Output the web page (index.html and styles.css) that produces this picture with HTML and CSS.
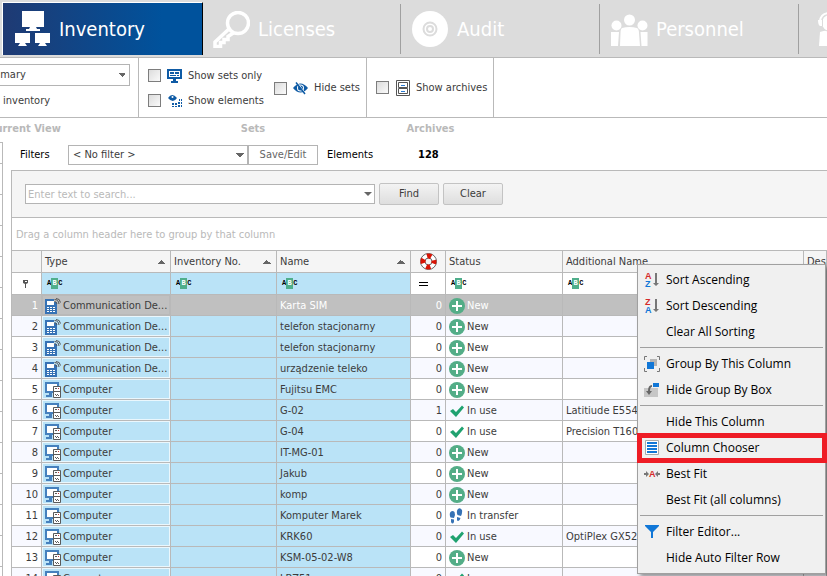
FILE: index.html
```html
<!DOCTYPE html>
<html lang="en">
<head>
	<meta charset="UTF-8">
	<title>Inventory</title>
	<link rel="stylesheet" href="styles.css">
</head>
<body>
	<svg class="sprite" aria-hidden="true">
		<symbol id="i-phone" viewBox="0 0 16 16">
			<path fill="#3672b5" d="M0 1h9v3h3v12H0z"/>
			<path fill="#fff" d="M2 3h7v4H2zM2 9h2v1H2zM5 9h2v1H5zM8 9h2v1H8zM2 11h2v1H2zM5 11h2v1H5zM8 11h2v1H8zM2 13h2v1H2zM5 13h2v1H5zM8 13h2v1H8z"/>
			<path fill="none" stroke="#555" d="M9.500 3.500q2 0 2.500 2.500M9.500 1.500q4 0 4.500 4.500M11 .5q4 0 4.500 4"/>
		</symbol>
		<symbol id="i-pc" viewBox="0 0 16 16">
			<path fill="#4580bd" d="M0 0h14v4h-2V2H2v7h6v2H0zM4 11h3v2H4zM1 13h6v2H1z"/>
			<path fill="#fff" d="M2 2h10v2H8v5H2z"/>
			<path fill="#fff" stroke="#5a5a5a" d="M8.500 4.500h7v11h-7z"/>
			<path fill="#5a5a5a" d="M10 6h2v1h-2zM9 9h6v1H9zM10 12h1v1h-1zM12 12h1v1h-1zM11 13h1v1h-1zM13 13h1v1h-1z"/>
			<path fill="#c33" d="M13 6h1v1h-1z"/>
		</symbol>
		<symbol id="i-new" viewBox="0 0 16 16">
			<circle cx="8" cy="8" r="8" fill="#53ad87"/>
			<path fill="#fff" d="M7 3h2v4h4v2H9v4H7V9H3V7h4z"/>
		</symbol>
		<symbol id="i-use" viewBox="0 0 16 16">
			<path fill="#20a270" d="M1 8l3-2 3 3 6-6.500 2 2L7 14z"/>
		</symbol>
		<symbol id="i-transfer" viewBox="0 0 16 16">
			<path fill="#3672b5" d="M1.500 4q2-2 4 0l.5 3-1 3-3.500-.5Q0 6 1.500 4zM2 11l3 .5V14q-1.500 3-3 0zM9 1q2-2 4 1 .5 3-1 6l-3.500-1Q7 3 9 1zM8 9l3.500 1q-1 4-3.500 2.500z"/>
		</symbol>
	</svg>

	<nav class="tabs">
		<a href="#" class="tab active">
			<svg width="37" height="37" viewBox="0 0 37 37" fill="#fff">
				<path d="M8 0h22v16H8zM16 16h6l1 2h3v2H12v-2h3zM1 22h15v10H1zM6 32h5l2 3H4zM21 22h15v10H21zM26 32h5l2 3h-9z"/>
			</svg>
			Inventory
		</a>
		<a href="#" class="tab">
			<svg width="37" height="37" viewBox="0 0 37 37" fill="none" stroke="#fff" stroke-width="3.500">
				<circle cx="25" cy="12" r="10.500"/>
				<path d="M17 17L2 31v4.500h5.500v-4h3.500v-3h4v-3l6-4"/>
			</svg>
			Licenses
		</a>
		<a href="#" class="tab">
			<svg width="37" height="37" viewBox="0 0 37 37">
				<circle cx="18" cy="18" r="18" fill="#fff"/>
				<g fill="none" stroke="#dcdcdc" stroke-width="2"><circle cx="18" cy="18" r="6.500"/><circle cx="18" cy="18" r="3"/></g>
			</svg>
			Audit
		</a>
		<a href="#" class="tab">
			<svg width="37" height="37" viewBox="0 0 37 37" fill="#fff">
				<circle cx="18.500" cy="9" r="5.500"/><circle cx="5.500" cy="14.500" r="5"/><circle cx="31.500" cy="14.500" r="5"/>
				<path d="M11 17q7.500-2 15 0 2 1 2 5l1 13H9l.5-13q0-4 1.500-5zM0 21h8L7 35H0zM29.500 21h7v14h-6z"/>
			</svg>
			Personnel
		</a>
		<a href="#" class="tab last" aria-label="Service">
			<svg width="37" height="37" viewBox="0 0 37 37" fill="#fff">
				<circle cx="12" cy="12" r="8"/>
				<path d="M2 21q10-4 20 0l3 14H1z"/>
				<path fill="none" stroke="#fff" stroke-width="2" d="M2 10q1-8 10-8"/>
				<path d="M0 9h4v6H2q-2-1-2-6z"/>
				<path fill="none" stroke="#dcdcdc" d="M4.500 8v7M4 16q3 5 9 4"/>
			</svg>
		</a>
	</nav>

	<section class="ribbon">
		<div class="group view">
			<div class="group-body">
				<select class="combo" aria-label="View"><option>Summary</option></select>
				<span class="view-note">inventory</span>
			</div>
			<h2>Current View</h2>
		</div>
		<div class="group sets">
			<div class="group-body">
				<label><input type="checkbox">
					<svg width="16" height="16" viewBox="0 0 16 16" fill="#0f5ba5"><path d="M0 1h15v10H0zM6 11h3v2h2v2H4v-2h2z"/><path fill="#fff" d="M2 3h11v6H2z"/><path d="M3 4h4v2H3zM8 4h4v2H8zM3 7h6v1H3zM10 7h2v1h-2z"/></svg>
					Show sets only</label>
				<label class="hide-sets"><input type="checkbox">
					<svg width="16" height="16" viewBox="0 0 16 16" fill="#0f5ba5"><path d="M0 8q7.500-9 15 0-7.500 9-15 0z"/><circle cx="7.500" cy="8" r="3.500" fill="#fff"/><circle cx="7.500" cy="8" r="2.500"/><path stroke="#fff" d="M4 2l9 12"/><path stroke="#0f5ba5" stroke-width="1.500" d="M3 2.500l9 11.500"/></svg>
					Hide sets</label>
				<label><input type="checkbox">
					<svg width="16" height="16" viewBox="0 0 16 16" fill="#0f5ba5"><path d="M1 5q4-6 9 0-4 6-9 0z"/><circle cx="5.500" cy="4" r="1" fill="#fff"/><path d="M12 6h1v2h-1zM14 6h1v2h-1zM5 10h2v2H5zM8 10h2v2H8zM11 9h2v2h-2zM14 9h1v2h-1zM5 13h2v1H5zM8 13h2v1H8zM11 12h2v2h-2zM14 12h1v2h-1z"/></svg>
					Show elements</label>
			</div>
			<h2>Sets</h2>
		</div>
		<div class="group archives">
			<div class="group-body">
				<label><input type="checkbox">
					<svg width="16" height="16" viewBox="0 0 16 16" fill="none" stroke="#555"><path d="M1.500.5h13v15h-13zM3.500 2.500h9v5h-9zM3.500 8.500h9v5h-9z"/><path stroke="#2b7cd3" d="M6 5.500h4M6 11.500h4"/></svg>
					Show archives</label>
			</div>
			<h2>Archives</h2>
		</div>
		<div class="group rest"><div class="group-body"></div></div>
	</section>

	<div class="page">
		<div class="side"></div>
		<main>
			<div class="filters">
				<label for="filter">Filters</label>
				<select id="filter" class="combo"><option>&lt; No filter &gt;</option></select>
				<button type="button" class="save">Save/Edit</button>
				<span class="elements">Elements</span>
				<b>128</b>
			</div>
			<div class="grid">
				<div class="search">
					<div class="search-box">
						<input type="text" placeholder="Enter text to search..." aria-label="Search">
					</div>
					<button type="button">Find</button>
					<button type="button">Clear</button>
				</div>
				<div class="group-by">Drag a column header here to group by that column</div>
				<table>
					<colgroup>
						<col class="c-no"><col class="c-type"><col class="c-inv"><col class="c-name"><col class="c-sup"><col class="c-status"><col class="c-add"><col>
					</colgroup>
					<thead>
						<tr>
							<th></th>
							<th class="sorted">Type</th>
							<th class="sorted">Inventory No.</th>
							<th class="sorted">Name</th>
							<th class="sup"><svg width="17" height="17" viewBox="0 0 17 17"><circle cx="8.500" cy="8.500" r="5.500" fill="none" stroke="#fff" stroke-width="5"/><g fill="none" stroke="#666"><circle cx="8.500" cy="8.500" r="8"/><circle cx="8.500" cy="8.500" r="3.500"/></g><circle cx="8.500" cy="8.500" r="5.500" fill="none" stroke="#d81405" stroke-width="5" stroke-dasharray="4.320 4.320" stroke-dashoffset="2.160"/></svg></th>
							<th>Status</th>
							<th>Additional Name</th>
							<th>Description</th>
						</tr>
						<tr class="auto-filter">
							<td class="pin"><svg width="7" height="9" viewBox="0 0 7 9"><path fill="#555" d="M1 1h5v3L4 5v4H3V5L1 4z"/><path fill="#fff" d="M3 2h2v1H3z"/></svg></td>
							<td class="blue"><span class="abc">A<i>B</i>C</span></td>
							<td class="blue"><span class="abc">A<i>B</i>C</span></td>
							<td class="blue"><span class="abc">A<i>B</i>C</span></td>
							<td><svg class="eq" width="9" height="4" viewBox="0 0 9 4"><path d="M0 0h9v1H0zM0 3h9v1H0z"/></svg></td>
							<td><span class="abc">A<i>B</i>C</span></td>
							<td><span class="abc">A<i>B</i>C</span></td>
							<td></td>
						</tr>
					</thead>
					<tbody>
						<tr class="selected"><td>1</td><td><svg><use href="#i-phone"/></svg>Communication De...</td><td></td><td>Karta SIM</td><td>0</td><td><svg><use href="#i-new"/></svg>New</td><td></td><td></td></tr>
						<tr><td>2</td><td><svg><use href="#i-phone"/></svg>Communication De...</td><td></td><td>telefon stacjonarny</td><td>0</td><td><svg><use href="#i-new"/></svg>New</td><td></td><td></td></tr>
						<tr><td>3</td><td><svg><use href="#i-phone"/></svg>Communication De...</td><td></td><td>telefon stacjonarny</td><td>0</td><td><svg><use href="#i-new"/></svg>New</td><td></td><td></td></tr>
						<tr><td>4</td><td><svg><use href="#i-phone"/></svg>Communication De...</td><td></td><td>urządzenie teleko</td><td>0</td><td><svg><use href="#i-new"/></svg>New</td><td></td><td></td></tr>
						<tr><td>5</td><td><svg><use href="#i-pc"/></svg>Computer</td><td></td><td>Fujitsu EMC</td><td>0</td><td><svg><use href="#i-new"/></svg>New</td><td></td><td></td></tr>
						<tr><td>6</td><td><svg><use href="#i-pc"/></svg>Computer</td><td></td><td>G-02</td><td>1</td><td><svg><use href="#i-use"/></svg>In use</td><td>Latitiude E5540</td><td></td></tr>
						<tr><td>7</td><td><svg><use href="#i-pc"/></svg>Computer</td><td></td><td>G-04</td><td>0</td><td><svg><use href="#i-use"/></svg>In use</td><td>Precision T1600</td><td></td></tr>
						<tr><td>8</td><td><svg><use href="#i-pc"/></svg>Computer</td><td></td><td>IT-MG-01</td><td>0</td><td><svg><use href="#i-new"/></svg>New</td><td></td><td></td></tr>
						<tr><td>9</td><td><svg><use href="#i-pc"/></svg>Computer</td><td></td><td>Jakub</td><td>0</td><td><svg><use href="#i-new"/></svg>New</td><td></td><td></td></tr>
						<tr><td>10</td><td><svg><use href="#i-pc"/></svg>Computer</td><td></td><td>komp</td><td>0</td><td><svg><use href="#i-new"/></svg>New</td><td></td><td></td></tr>
						<tr><td>11</td><td><svg><use href="#i-pc"/></svg>Computer</td><td></td><td>Komputer Marek</td><td>0</td><td><svg><use href="#i-transfer"/></svg>In transfer</td><td></td><td></td></tr>
						<tr><td>12</td><td><svg><use href="#i-pc"/></svg>Computer</td><td></td><td>KRK60</td><td>0</td><td><svg><use href="#i-use"/></svg>In use</td><td>OptiPlex GX520</td><td></td></tr>
						<tr><td>13</td><td><svg><use href="#i-pc"/></svg>Computer</td><td></td><td>KSM-05-02-W8</td><td>0</td><td><svg><use href="#i-new"/></svg>New</td><td></td><td></td></tr>
						<tr><td>14</td><td><svg><use href="#i-pc"/></svg>Computer</td><td></td><td>LBZ51</td><td>0</td><td><svg><use href="#i-use"/></svg>In use</td><td></td><td></td></tr>
					</tbody>
				</table>
			</div>
		</main>
	</div>

	<div class="menu" role="menu">
		<button type="button" role="menuitem"><svg viewBox="0 0 16 16"><text x="1" y="7" fill="#d42a2a">A</text><text x="1" y="15" fill="#1177d7">Z</text><path fill="#777" d="M11 1h2v10h2l-3 3-3-3h2z"/></svg>Sort Ascending</button>
		<button type="button" role="menuitem"><svg viewBox="0 0 16 16"><text x="1" y="7" fill="#d42a2a">Z</text><text x="1" y="15" fill="#1177d7">A</text><path fill="#777" d="M11 1h2v10h2l-3 3-3-3h2z"/></svg>Sort Descending</button>
		<button type="button" role="menuitem"><svg></svg>Clear All Sorting</button>
		<hr>
		<button type="button" role="menuitem"><svg viewBox="0 0 16 16"><path fill="#b5b5b5" d="M6 3h7v7H6z"/><path fill="#1177d7" d="M3 6h7v7H3z"/><path fill="none" stroke="#777" d="M3 .5H.5V4M13 .5h2.500V4M3 15.500H.5V12M13 15.500h2.500V12"/></svg>Group By This Column</button>
		<button type="button" role="menuitem"><svg viewBox="0 0 16 16"><path fill="#c6c6c6" d="M0 6h14v9H0z"/><path fill="#1177d7" d="M9 1h6v4H9z"/><path fill="#666" d="M8 3v2q-2 0-2 4h2l-3 4-3-4h2q0-6 4-6z"/></svg>Hide Group By Box</button>
		<hr>
		<button type="button" role="menuitem"><svg></svg>Hide This Column</button>
		<button type="button" role="menuitem" class="marked"><svg viewBox="0 0 16 16"><path fill="#fff" stroke="#aaa" d="M1.500.5h13v14h-13z"/><path fill="#1177d7" d="M3 2h10v2H3zM3 5h10v2H3zM3 8h10v2H3zM3 11h10v2H3z"/></svg>Column Chooser</button>
		<button type="button" role="menuitem"><svg viewBox="0 0 16 16"><text x="5" y="11" fill="#d42a2a">A</text><path fill="#777" d="M0 7h2V5l3 3-3 3V9H0zM16 7h-2V5l-3 3 3 3V9h2z"/></svg>Best Fit</button>
		<button type="button" role="menuitem"><svg></svg>Best Fit (all columns)</button>
		<hr>
		<button type="button" role="menuitem"><svg viewBox="0 0 16 16"><path fill="#1177d7" d="M1 1h14v1L9 8v6H7V8L1 2z"/></svg>Filter Editor...</button>
		<button type="button" role="menuitem"><svg></svg>Hide Auto Filter Row</button>
	</div>
</body>
</html>
```
FILE: styles.css
```css
* {
	box-sizing: border-box;
	margin: 0;
	padding: 0;
}

body {
	height: 100vh;
	overflow: hidden;
	display: flex;
	flex-direction: column;
	position: relative;
	background: #fff;
	color: #3c3c3c;
	font: 11px/14px "DejaVu Sans Condensed", "DejaVu Sans", sans-serif;
}

button, input, select {
	font: inherit;
	color: inherit;
}

svg {
	flex: none;
}

.sprite {
	display: none;
}

/* module tabs */
.tabs {
	display: flex;
	flex: none;
	height: 58px;
	padding: 2px 0 2px 2px;
	background: #dcdcdc;
	border-bottom: 1px solid #b9b9b9;
	overflow: hidden;
}

.tab {
	display: flex;
	flex: none;
	align-items: center;
	gap: 8px;
	width: 199px;
	height: 50px;
	margin-top: 2px;
	padding-left: 11px;
	border-right: 1px solid #a0a0a0;
	color: #fff;
	font-size: 20px;
	line-height: 24px;
	text-decoration: none;
}

.tab:nth-child(2) {
	width: 198px;
	padding-left: 10px;
}

.tab.active {
	width: 201px;
	height: 53px;
	margin-top: 0;
	border: 1px solid #fff;
	border-right-color: #000;
	border-bottom: 0;
	background: linear-gradient(90deg, #1f3a73, #00529c 80%);
}

.tab.last {
	border: 0;
	padding-left: 19px;
}

/* ribbon */
.ribbon {
	display: flex;
	flex: none;
	margin-left: -90px;
}

.group-body {
	height: 60px;
	border-right: 1px solid #b9b9b9;
	border-bottom: 1px solid #b9b9b9;
}

.group h2 {
	padding-top: 4px;
	height: 24px;
	color: #b9b9b9;
	font-size: 11px;
	line-height: 14px;
	text-align: center;
}

.group label {
	display: flex;
	align-items: center;
	gap: 5px;
	white-space: nowrap;
}

.view {
	width: 229px;
}

.view .group-body {
	display: flex;
	flex-direction: column;
	gap: 8px;
	padding: 6px 8px 0 60px;
}

.view-note {
	padding-left: 33px;
}

.view .combo {
	height: 22px;
	padding-left: 7px;
}

.sets {
	width: 228px;
}

.sets .group-body {
	display: grid;
	grid-template-columns: 126px auto;
	grid-template-rows: 25px 25px;
	padding: 5px 0 0 9px;
}

.hide-sets {
	grid-row: 1 / 3;
	grid-column: 2;
}

.archives {
	width: 127px;
}

.archives .group-body {
	display: flex;
	padding-left: 9px;
}

.rest {
	flex: 1;
}

.rest .group-body {
	border-right: 0;
}

input[type=checkbox] {
	appearance: none;
	width: 13px;
	height: 13px;
	margin-right: 1px;
	border: 1px solid #7d7d7d;
	background: linear-gradient(135deg, #dcdcdc, #fafafa);
}

.combo {
	appearance: none;
	border: 1px solid #b4b4b4;
	border-radius: 0;
	background: #fff conic-gradient(from -45deg at 50% 100%, #666 90deg, transparent 0) no-repeat right 3px center / 8px 4px;
}

.combo,
.search-box input {
	outline: 0;
}

.combo {
	background-image: conic-gradient(from -45deg at 50% 100%, #666 90deg, #fff 0);
}

/* work area */
.page {
	display: flex;
	flex: 1;
	min-height: 0;
}

.side {
	width: 3px;
	flex: none;
	border-top: 1px solid #b9b9b9;
	border-right: 1px solid #b9b9b9;
	background: repeating-linear-gradient(#fff 0 20px, #b9b9b9 20px 21px, #fff 21px 31px);
}

main {
	flex: 1;
	min-width: 0;
	padding: 3px 0 0 8px;
}

.filters {
	display: flex;
	align-items: center;
	height: 20px;
	margin-bottom: 5px;
	padding-left: 9px;
	color: #000;
	line-height: 16px;
}

.filters label {
	width: 48px;
}

.filters .combo {
	width: 180px;
	height: 20px;
	padding-left: 4px;
	color: #3c3c3c;
}

.save {
	width: 70px;
	height: 20px;
	border: 1px solid #b4b4b4;
	background: #fff;
	color: #666;
}

.elements {
	width: 91px;
	margin-left: 9px;
}

.grid {
	border-top: 1px solid #b9b9b9;
	border-left: 1px solid #b9b9b9;
}

.search {
	display: flex;
	align-items: center;
	gap: 4px;
	height: 47px;
	padding-left: 13px;
	border-bottom: 1px solid #b9b9b9;
	background: #f5f5f5;
}

.search-box {
	position: relative;
	width: 350px;
}

.search-box input {
	display: block;
	width: 100%;
	height: 20px;
	padding-left: 2px;
	border: 1px solid #b4b4b4;
	background: #fff;
}

.search-box input::placeholder {
	color: #b9b9b9;
}

.search-box::after {
	content: "";
	position: absolute;
	right: 3px;
	top: 8px;
	border: 4px solid transparent;
	border-top-color: #666;
	border-bottom: 0;
}

.search button {
	width: 60px;
	height: 22px;
	border: 1px solid #c3c3c3;
	border-radius: 2px;
	background: linear-gradient(#f3f3f3, #dedede);
}

.group-by {
	height: 33px;
	padding: 10px 4px 0;
	border-bottom: 1px solid #b9b9b9;
	color: #b9b9b9;
}

table {
	width: 100%;
	table-layout: fixed;
	border-spacing: 0;
}

.c-no { width: 30px; }
.c-type { width: 129px; }
.c-inv { width: 106px; }
.c-name { width: 134px; }
.c-sup { width: 35px; }
.c-status { width: 117px; }
.c-add { width: 241px; }

th, td {
	height: 21px;
	padding: 0 3px;
	border-right: 1px solid #b9b9b9;
	border-bottom: 1px solid #b9b9b9;
	overflow: hidden;
	white-space: nowrap;
	text-align: left;
	font-weight: normal;
	vertical-align: middle;
}

th {
	height: 22px;
	background: #f5f5f5;
}

th.sorted {
	background: #f5f5f5 conic-gradient(from 135deg at 50% 0, #666 90deg, #f5f5f5 0) no-repeat right 5px center / 8px 4px;
}

th.sup svg {
	display: block;
	margin: auto;
}

.auto-filter td {
	height: 22px;
	padding-left: 5px;
}

.auto-filter .blue {
	background: #bae3f7;
}

.pin svg {
	display: block;
	margin-left: 5px;
}

.eq {
	display: block;
	margin-left: 3px;
}

.abc {
	display: flex;
	align-items: center;
	color: #000;
	font: bold 7px/11px "Liberation Mono", monospace;
}

.abc i {
	width: 7px;
	background: #4fae8b;
	color: #fff;
	font-style: normal;
	text-align: center;
}

tbody td {
	padding-top: 2px;
}

tbody tr:nth-child(even) {
	background: #f8f9ff;
}

tbody td:first-child,
tbody td:nth-child(5) {
	text-align: right;
}

tbody td:nth-child(2),
tbody td:nth-child(3),
tbody td:nth-child(4) {
	background: #bae3f7;
}

tbody td:nth-child(2) {
	box-shadow: inset 0 0 0 1px #eaf7fd;
}

tbody svg {
	width: 16px;
	height: 16px;
	margin-right: 2px;
	vertical-align: middle;
}

tbody .selected td {
	background: #c0c0c0;
	border-right-color: #b9b9b9;
	color: #fff;
}

tbody .selected td:nth-child(2) {
	box-shadow: inset 0 0 0 1px #b9b9b9;
	color: #3c3c3c;
}

/* column context menu */
.menu {
	position: absolute;
	left: 637px;
	top: 264px;
	width: 189px;
	padding: 2px;
	border: 1px solid #a0a0a0;
	background: #f0f0f0;
	box-shadow: 3px 3px 4px rgba(0, 0, 0, .4);
	color: #000;
	font: 12px/16px "Open Sans", "Noto Sans", sans-serif;
}

.menu button {
	display: flex;
	align-items: center;
	gap: 6px;
	width: 100%;
	height: 26px;
	padding-left: 4px;
	border: 0;
	background: none;
	text-align: left;
	white-space: nowrap;
}

.menu svg {
	width: 16px;
	height: 16px;
	font: bold 9px "Liberation Sans", sans-serif;
}

.menu hr {
	height: 6px;
	border: solid #f0f0f0;
	border-width: 2px 0 3px;
	background: #a0a0a0;
}

.menu .marked {
	position: relative;
}

.marked::after {
	content: "";
	position: absolute;
	inset: -2px -4px -2px -3px;
	border: 5px solid #ee1c25;
}
```
